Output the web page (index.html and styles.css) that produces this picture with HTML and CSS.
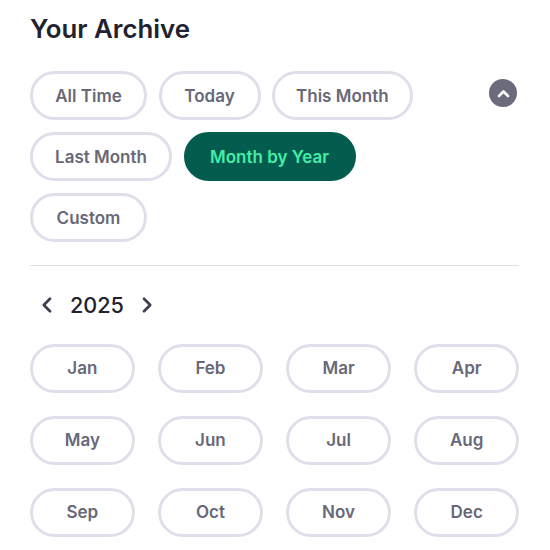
FILE: index.html
```html
<!DOCTYPE html>
<html lang="en">
<head>
    <meta charset="UTF-8">
    <meta name="viewport" content="width=device-width, initial-scale=1.0">
    <title>Your Archive</title>
    <link rel="stylesheet" href="styles.css">
</head>
<body>
    <div class="archive">
        <h2 class="title">Your Archive</h2>
        <div class="filters">
            <div class="pills">
                <button class="pill pill-short">All Time</button>
                <button class="pill pill-today">Today</button>
                <button class="pill">This Month</button>
                <button class="pill pill-last">Last Month</button>
                <button class="pill active">Month by Year</button>
                <button class="pill pill-short">Custom</button>
            </div>
            <button class="collapse" aria-label="Collapse">
                <svg width="13" height="9" viewBox="0 0 13 9"><path d="M2 7 L6.5 2.5 L11 7" fill="none" stroke="#fff" stroke-width="2.6" stroke-linecap="round" stroke-linejoin="round"/></svg>
            </button>
        </div>
        <hr class="divider">
        <div class="year-nav">
            <svg width="12" height="18" viewBox="0 0 12 18"><path d="M9 2.8 L2.8 9 L9 15.2" fill="none" stroke="#3f3f4f" stroke-width="2.7" stroke-linecap="round" stroke-linejoin="round"/></svg>
            <span class="year">2025</span>
            <svg width="12" height="18" viewBox="0 0 12 18"><path d="M3 2.8 L9.2 9 L3 15.2" fill="none" stroke="#3f3f4f" stroke-width="2.7" stroke-linecap="round" stroke-linejoin="round"/></svg>
        </div>
        <div class="months">
            <button class="pill">Jan</button>
            <button class="pill">Feb</button>
            <button class="pill">Mar</button>
            <button class="pill">Apr</button>
            <button class="pill">May</button>
            <button class="pill">Jun</button>
            <button class="pill">Jul</button>
            <button class="pill">Aug</button>
            <button class="pill">Sep</button>
            <button class="pill">Oct</button>
            <button class="pill">Nov</button>
            <button class="pill">Dec</button>
        </div>
    </div>
</body>
</html>
```

FILE: styles.css
```css
html, body {
    margin: 0;
    padding: 0;
    background: #fff;
    font-family: Inter, "Noto Sans", sans-serif;
}
.archive {
    width: 489px;
    padding: 13px 0 0 30px;
}
.title {
    margin: 0 0 27px;
    height: 31px;
    font-size: 25.8px;
    line-height: 31px;
    font-weight: 600;
    color: #21212f;
}
.filters {
    display: flex;
    align-items: flex-start;
}
.pills {
    flex: 1;
    display: flex;
    flex-wrap: wrap;
    gap: 12px 11.5px;
    padding-right: 60px;
}
.pill {
    box-sizing: border-box;
    height: 49px;
    padding: 0 21px;
    background: #fff;
    border: 3px solid #dfdfeb;
    border-radius: 25px;
    font-family: inherit;
    font-size: 17px;
    font-weight: 600;
    color: #686878;
}
.pill-short {
    min-width: 117px;
}
.pill-today {
    min-width: 102px;
}
.pill-last {
    min-width: 142px;
}
.pill.active {
    min-width: 172px;
    background: #045c4f;
    border-color: #045c4f;
    color: #45eda5;
}
.collapse {
    flex: none;
    display: flex;
    align-items: center;
    justify-content: center;
    width: 28px;
    height: 28px;
    margin: 8px 2px 0 0;
    padding: 0;
    border: none;
    border-radius: 50%;
    background: #6b6b7b;
}
.divider {
    margin: 23px 0 0;
    border: none;
    border-top: 1px solid #dfdfe6;
}
.year-nav {
    display: flex;
    align-items: center;
    gap: 17px;
    height: 30px;
    margin: 24px 0 24px 11px;
}
.year {
    font-size: 21.6px;
    font-weight: 500;
    color: #21212f;
}
.months {
    display: grid;
    grid-template-columns: repeat(4, 1fr);
    gap: 23px 23.5px;
}
.months .pill {
    padding: 0 0 2px;
}
```
